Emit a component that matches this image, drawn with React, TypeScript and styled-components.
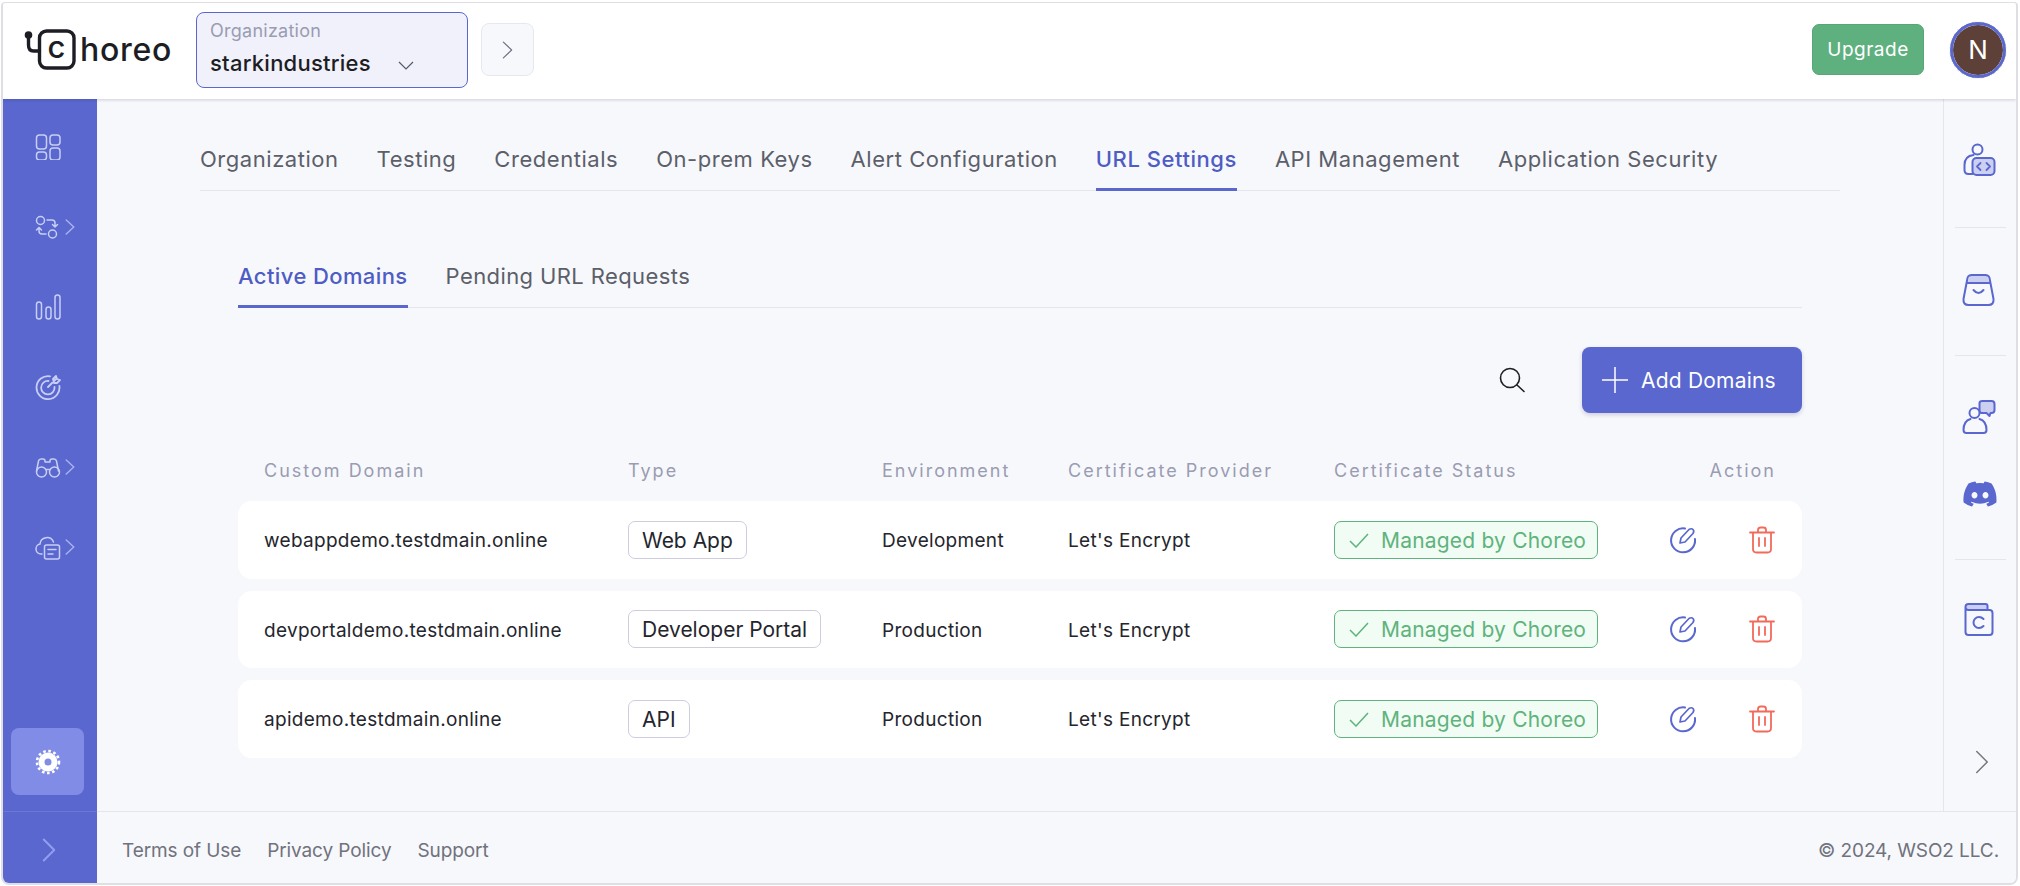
import React, { FC, ReactNode } from "react";
import styled, { createGlobalStyle } from "styled-components";
import { FaDiscord } from "react-icons/fa";

const GlobalStyle = createGlobalStyle`
  html, body {
    margin: 0;
    padding: 0;
    background: #fff;
    font-family: "Inter", "Liberation Sans", sans-serif;
  }
  * { box-sizing: border-box; }
`;

const topTabs = [
  "Organization",
  "Testing",
  "Credentials",
  "On-prem Keys",
  "Alert Configuration",
  "URL Settings",
  "API Management",
  "Application Security",
];

const domains = [
  { name: "webappdemo.testdmain.online", type: "Web App", env: "Development" },
  { name: "devportaldemo.testdmain.online", type: "Developer Portal", env: "Production" },
  { name: "apidemo.testdmain.online", type: "API", env: "Production" },
];

const Chevron: FC<{ size: number; color: string; width?: number }> = ({ size, color, width = 1.5 }) => (
  <svg width={size / 2 + 2} height={size} viewBox="0 0 8 16" fill="none" stroke={color} strokeWidth={width} strokeLinecap="round" strokeLinejoin="round" preserveAspectRatio="none">
    <path d="M1 1l6 7-6 7" vectorEffect="non-scaling-stroke" />
  </svg>
);

const Logo: FC = () => (
  <LogoWrap>
    <svg width="52" height="44" viewBox="0 0 52 44" fill="none" stroke="#1d1d24" strokeWidth="3.4" strokeLinecap="round">
      <circle cx="4.5" cy="7" r="3.8" fill="#1d1d24" stroke="none" />
      <path d="M4.500 8v9q0 6 5 6h6" />
      <rect x="15.500" y="3" width="34.500" height="37" rx="7" />
    </svg>
    <LogoC>c</LogoC>
    <LogoText>horeo</LogoText>
  </LogoWrap>
);

const NavSvg: FC<{ children: ReactNode }> = ({ children }) => (
  <svg width="26" height="26" viewBox="0 0 26 26" fill="none" stroke="#c9cef4" strokeWidth="1.5" strokeLinecap="round" strokeLinejoin="round">
    {children}
  </svg>
);

const navItems: { icon: ReactNode; more?: boolean }[] = [
  {
    icon: (
      <NavSvg>
        <rect x="1.5" y="1" width="10" height="14" rx="3" />
        <rect x="15" y="1" width="10" height="10" rx="3" />
        <rect x="1.5" y="18" width="10" height="8" rx="3" />
        <rect x="15" y="14" width="10" height="12" rx="3" />
      </NavSvg>
    ),
  },
  {
    more: true,
    icon: (
      <NavSvg>
        <circle cx="5.500" cy="6.500" r="4" />
        <circle cx="17.500" cy="20" r="4" />
        <path d="M12 6h5q3 0 3 3v4M17.500 10.500l2.500 2.500 2.500-2.500M11 20H7q-3 0-3-3v-3M1.500 16L4 13.500 6.500 16" />
      </NavSvg>
    ),
  },
  {
    icon: (
      <NavSvg>
        <rect x="1.5" y="8" width="5" height="17" rx="2.5" />
        <rect x="11" y="13" width="5" height="12" rx="2.5" />
        <rect x="20" y="1" width="5" height="24" rx="2.5" />
      </NavSvg>
    ),
  },
  {
    icon: (
      <NavSvg>
        <path d="M15 2.300A11.500 11.500 0 1 0 24.400 12M13.500 7A6.700 6.700 0 1 0 19.500 13" strokeWidth="1.8" />
        <path d="M13 13l8-8M18 5l3-3 1 3 3 1-3 3h-3z" strokeWidth="1.8" />
      </NavSvg>
    ),
  },
  {
    more: true,
    icon: (
      <NavSvg>
        <circle cx="6.500" cy="18" r="5" />
        <circle cx="19.500" cy="18" r="5" />
        <path d="M1.500 17l2-10q.5-2 2.500-2h2q2 0 2 2v1h5V7q0-2 2-2h2q2 0 2.500 2l2 10M11.500 15.500h3" />
      </NavSvg>
    ),
  },
  {
    more: true,
    icon: (
      <NavSvg>
        <path d="M7 20H6a5 5 0 0 1-1-9.900A7 7 0 0 1 18.500 8" />
        <rect x="9.500" y="11" width="15" height="14" rx="2" />
        <path d="M13 15.500h8M13 20h5" />
      </NavSvg>
    ),
  },
];

const RailSvg: FC<{ children: ReactNode }> = ({ children }) => (
  <svg width="36" height="36" viewBox="1.5 0 36 36" fill="none" stroke="#5967cf" strokeWidth="2" strokeLinecap="round" strokeLinejoin="round">
    {children}
  </svg>
);

const App: FC = () => {
  return (
    <Window>
      <GlobalStyle />
      <Header>
        <Logo />
        <OrgSelect>
          <OrgLabel>Organization</OrgLabel>
          <OrgValue>
            starkindustries
            <svg width="16" height="9" viewBox="0 0 16 9" fill="none" stroke="#555a6a" strokeWidth="1.2">
              <path d="M1 1l7 7 7-7" />
            </svg>
          </OrgValue>
        </OrgSelect>
        <ExpandButton>
          <Chevron size={18} color="#6d7080" width={1.2} />
        </ExpandButton>
        <HeaderRight>
          <UpgradeButton>Upgrade</UpgradeButton>
          <Avatar>N</Avatar>
        </HeaderRight>
      </Header>
      <Main>
        <Sidebar>
          {navItems.map((item, i) => (
            <NavItem key={i}>
              {item.icon}
              {item.more && <Chevron size={16} color="#a9b0ee" />}
            </NavItem>
          ))}
          <SettingsItem>
            <svg width="26" height="26" viewBox="0 0 26 26" fill="none">
              <circle cx="13" cy="13" r="11" stroke="#fff" strokeWidth="2.6" strokeDasharray="2.6 2.58" />
              <circle cx="13" cy="13" r="6.500" stroke="#fff" strokeWidth="6" />
            </svg>
          </SettingsItem>
          <CollapseItem>
            <Chevron size={24} color="#939df0" width={2} />
          </CollapseItem>
        </Sidebar>
        <ContentColumn>
          <ContentRow>
            <Page>
              <TopTabs>
                {topTabs.map((t) => (
                  <TopTab key={t} $active={t === "URL Settings"}>
                    {t}
                  </TopTab>
                ))}
              </TopTabs>
              <Section>
                <SubTabs>
                  <SubTab $active>Active Domains</SubTab>
                  <SubTab>Pending URL Requests</SubTab>
                </SubTabs>
                <Toolbar>
                  <svg width="28" height="28" viewBox="0 0 28 28" fill="none" stroke="#1d1d24" strokeWidth="1.600" strokeLinecap="round">
                    <circle cx="12" cy="12" r="9.500" />
                    <path d="M19 19l7 6.500" />
                  </svg>
                  <AddButton>
                    <svg width="26" height="26" viewBox="0 0 26 26" stroke="#fff" strokeWidth="1.500">
                      <path d="M13 0v26M0 13h26" />
                    </svg>
                    Add Domains
                  </AddButton>
                </Toolbar>
                <TableHead>
                  <HeadCell>Custom Domain</HeadCell>
                  <HeadCell>Type</HeadCell>
                  <HeadCell>Environment</HeadCell>
                  <HeadCell>Certificate Provider</HeadCell>
                  <HeadCell>Certificate Status</HeadCell>
                  <ActionHead>Action</ActionHead>
                </TableHead>
                <Rows>
                  {domains.map((d) => (
                    <Row key={d.name}>
                      <Cell>{d.name}</Cell>
                      <div>
                        <TypeBadge>{d.type}</TypeBadge>
                      </div>
                      <Cell>{d.env}</Cell>
                      <Cell>Let's Encrypt</Cell>
                      <div>
                        <StatusBadge>
                          <svg width="20" height="15" viewBox="0 0 20 15" fill="none" stroke="#5fb37c" strokeWidth="1.500">
                            <path d="M1 8l6 6L19 1" />
                          </svg>
                          Managed by Choreo
                        </StatusBadge>
                      </div>
                      <Actions>
                        <svg width="28" height="28" viewBox="0 0 28 28" fill="none" stroke="#5967cf" strokeWidth="2" strokeLinecap="round" strokeLinejoin="round">
                          <path d="M16 2.500A12 12 0 1 0 26 13" />
                          <path d="M11 17l1-5 8-8.500q2.500-1.500 4 0t0 4L16 16z" strokeWidth="1.700" />
                        </svg>
                        <svg width="26" height="28" viewBox="0 0 26 28" fill="none" stroke="#f26a5a" strokeWidth="1.800" strokeLinecap="round" strokeLinejoin="round">
                          <path d="M1 6.500h24M9 6.500V4q0-2.500 2.500-2.500h3Q17 1.500 17 4v2.500M4 6.500V23q0 3.500 3.500 3.500h11q3.500 0 3.500-3.500V6.500M10 12v8M16 12v8" />
                        </svg>
                      </Actions>
                    </Row>
                  ))}
                </Rows>
              </Section>
            </Page>
            <Rail>
              <RailGroup>
                <RailSvg>
                  <circle cx="17" cy="6.500" r="5" />
                  <path d="M13 12q-9 1-9 10v5q0 4 4 4h4" />
                  <rect x="12" y="15" width="22" height="17" rx="4" fill="#cbcff0" />
                  <path d="M20 20l-3.500 3.500L20 27M26 20l3.500 3.500L26 27" strokeWidth="1.800" />
                </RailSvg>
              </RailGroup>
              <RailGroup $tight>
                <RailSvg>
                  <path d="M7 11l2-6q.5-2 3-2h12q2.500 0 3 2l2 6z" fill="#cbcff0" stroke="none" />
                  <path d="M7 11h22M9 3.500q-1.500.5-2 2.500L3 27q-.5 6 5 6h20q5.500 0 5-6L29 6q-.5-2-2-2.500-1-.5-2-.5H11q-1 0-2 .5zM13 18q5 6 10 0" />
                </RailSvg>
              </RailGroup>
              <RailGroup $tight>
                <RailSvg>
                  <path d="M19 3q0-2 3-2h9q3 0 3 3v6q0 3-3 3h-1l-1 3-3-3h-5q-2 0-2-3z" fill="#cbcff0" />
                  <circle cx="14" cy="13" r="5" fill="#f7f8fc" />
                  <path d="M10 19q-7 2-7 11 0 3 3 3h17q3 0 3-3 0-9-7-11" />
                </RailSvg>
                <FaDiscord size={36} color="#5967cf" />
              </RailGroup>
              <RailGroup $last>
                <RailSvg>
                  <path d="M6 7V4q0-2 3-2h16q2 0 2 2v4H9q-3 0-3-1z" fill="#cbcff0" stroke="none" />
                  <path d="M27 8V4q0-2-2-2H8q-3 0-3 3v25q0 3 3 3h21q3 0 3-3V11q0-3-3-3H8q-3 0-3-3" />
                  <path d="M23 17q-2-2-4.500-2a5.500 5.500 0 0 0 0 11q2.500 0 4.500-2" />
                </RailSvg>
              </RailGroup>
              <RailChevron>
                <Chevron size={24} color="#77787f" />
              </RailChevron>
            </Rail>
          </ContentRow>
          <Footer>
            <FooterLinks>
              <span>Terms of Use</span>
              <span>Privacy Policy</span>
              <span>Support</span>
            </FooterLinks>
            <span>© 2024, WSO2 LLC.</span>
          </Footer>
        </ContentColumn>
      </Main>
    </Window>
  );
};

const Window = styled.div`
  display: flex;
  flex-direction: column;
  height: 883px;
  margin: 2px 2px 1px 1px;
  border: solid #dfdfe3;
  border-width: 1px 2px 2px 2px;
  border-radius: 4px 4px 8px 8px;
  overflow: hidden;
`;

const Header = styled.header`
  position: relative;
  z-index: 2;
  flex: none;
  display: flex;
  align-items: center;
  height: 96px;
  padding: 0 9px 3px 21px;
  background: #fff;
  box-shadow: 0 1px 3px rgba(30, 30, 60, 0.18);
`;

const LogoWrap = styled.div`
  position: relative;
  display: flex;
  align-items: center;
  width: 150px;
  margin-right: 22px;
  color: #1d1d24;
`;

const LogoC = styled.span`
  position: absolute;
  left: 15px;
  top: 0;
  width: 35px;
  text-align: center;
  font-size: 31px;
  line-height: 38px;
  font-weight: 500;
`;

const LogoText = styled.span`
  margin-left: 4px;
  font-size: 32px;
  line-height: 44px;
  font-weight: 500;
  letter-spacing: 0.7px;
`;

const OrgSelect = styled.div`
  display: flex;
  flex-direction: column;
  justify-content: center;
  gap: 9px;
  width: 272px;
  height: 76px;
  padding: 0 13px 3px;
  background: #f0f1fa;
  border: 1px solid #5967cf;
  border-radius: 8px;
`;

const OrgLabel = styled.div`
  font-size: 18px;
  line-height: 20px;
  letter-spacing: 0.25px;
  color: #9a9cb2;
`;

const OrgValue = styled.div`
  display: flex;
  align-items: center;
  gap: 27px;
  font-size: 22px;
  line-height: 26px;
  letter-spacing: 0.25px;
  font-weight: 500;
  color: #1d1d24;
  svg {
    margin-top: 5px;
  }
`;

const ExpandButton = styled.div`
  display: flex;
  align-items: center;
  justify-content: center;
  width: 53px;
  height: 53px;
  margin-left: 13px;
  background: #f7f8fc;
  border: 1px solid #e6e8f0;
  border-radius: 8px;
`;

const HeaderRight = styled.div`
  display: flex;
  align-items: center;
  gap: 25px;
  margin-left: auto;
`;

const UpgradeButton = styled.div`
  display: flex;
  align-items: center;
  justify-content: center;
  width: 112px;
  height: 51px;
  background: #5fb07f;
  border: 1px solid #58a676;
  border-radius: 7px;
  color: #fff;
  font-size: 19px;
  letter-spacing: 0.5px;
`;

const Avatar = styled.div`
  display: flex;
  align-items: center;
  justify-content: center;
  width: 58px;
  height: 58px;
  background: #5d4037;
  border: 1px solid #fff;
  border-radius: 50%;
  outline: 3px solid #5967cf;
  outline-offset: -4px;
  box-shadow: inset 0 0 0 3px #fff;
  color: #fff;
  font-size: 26px;
`;

const Main = styled.div`
  flex: 1;
  display: flex;
  min-height: 0;
`;

const Sidebar = styled.nav`
  flex: none;
  display: flex;
  flex-direction: column;
  width: 94px;
  padding-top: 8px;
  background: #5967cf;
`;

const NavItem = styled.div`
  display: flex;
  align-items: center;
  gap: 4px;
  height: 80px;
  padding-left: 32px;
`;

const SettingsItem = styled.div`
  display: flex;
  align-items: center;
  justify-content: center;
  width: 73px;
  height: 67px;
  margin: auto 0 16px 8px;
  background: #818ce6;
  border-radius: 8px;
`;

const CollapseItem = styled.div`
  display: flex;
  align-items: center;
  justify-content: center;
  height: 72px;
  padding: 4px 2px 0 0;
  border-top: 1px solid #6c78d6;
`;

const ContentColumn = styled.div`
  flex: 1;
  display: flex;
  flex-direction: column;
  min-width: 0;
  background: #f7f8fc;
`;

const ContentRow = styled.div`
  flex: 1;
  display: flex;
  min-height: 0;
`;

const Page = styled.main`
  flex: 1;
  padding: 37px 103px 0;
`;

const TopTabs = styled.div`
  display: flex;
  gap: 38px;
  border-bottom: 1px solid #e4e6ee;
`;

const TopTab = styled.div<{ $active?: boolean }>`
  height: 55px;
  padding-top: 9px;
  font-size: 22px;
  line-height: 28px;
  letter-spacing: 0.54px;
  white-space: nowrap;
  color: ${(p) => (p.$active ? "#4e5cc4" : "#5c5f6a")};
  font-weight: ${(p) => (p.$active ? 500 : 400)};
  border-bottom: 3px solid ${(p) => (p.$active ? "#5967cf" : "transparent")};
  margin-bottom: -1px;
`;

const Section = styled.section`
  padding: 62px 38px 0;
`;

const SubTabs = styled(TopTabs)`
  gap: 38px;
`;

const SubTab = styled(TopTab)`
  height: 55px;
  letter-spacing: 0.4px;
`;

const Toolbar = styled.div`
  display: flex;
  align-items: center;
  justify-content: flex-end;
  gap: 56px;
  margin-top: 39px;
`;

const AddButton = styled.div`
  display: flex;
  align-items: center;
  gap: 13px;
  width: 220px;
  height: 66px;
  padding-left: 20px;
  background: #5967cf;
  border-radius: 8px;
  box-shadow: 0 2px 4px rgba(40, 40, 90, 0.2);
  color: #fff;
  font-size: 21px;
  letter-spacing: 0.2px;
`;

const tableColumns = "364px 254px 186px 266px 264px 1fr";

const TableHead = styled.div`
  display: grid;
  grid-template-columns: ${tableColumns};
  align-items: center;
  height: 24px;
  margin-top: 45px;
  padding: 0 26px 0 26px;
`;

const HeadCell = styled.div`
  font-size: 18px;
  letter-spacing: 2px;
  color: #9a9cb2;
  white-space: nowrap;
`;

const ActionHead = styled(HeadCell)`
  text-align: right;
`;

const Rows = styled.div`
  display: flex;
  flex-direction: column;
  gap: 12px;
  margin-top: 19px;
`;

const Row = styled.div`
  display: grid;
  grid-template-columns: ${tableColumns};
  align-items: center;
  height: 77.5px;
  padding: 0 27px 0 26px;
  background: #fff;
  border-radius: 14px;
`;

const Cell = styled.div`
  padding-top: 2px;
  font-size: 19px;
  letter-spacing: 0.3px;
  color: #24252d;
  white-space: nowrap;
`;

const TypeBadge = styled.span`
  display: inline-flex;
  align-items: center;
  height: 38px;
  padding: 1px 13px 0;
  border: 1px solid #cdcddf;
  border-radius: 7px;
  font-size: 21px;
  color: #24252d;
  white-space: nowrap;
`;

const StatusBadge = styled.span`
  display: inline-flex;
  align-items: center;
  gap: 12px;
  width: 264px;
  height: 38px;
  padding: 1px 0 0 14px;
  background: #f1fcf4;
  border: 1px solid #5fb37c;
  border-radius: 7px;
  font-size: 21px;
  letter-spacing: 0.2px;
  color: #5fb37c;
  white-space: nowrap;
`;

const Actions = styled.div`
  display: flex;
  justify-content: flex-end;
  align-items: center;
  gap: 52px;
`;

const Rail = styled.aside`
  flex: none;
  display: flex;
  flex-direction: column;
  align-items: center;
  width: 73px;
  border-left: 1px solid #e4e6ee;
`;

const RailGroup = styled.div<{ $last?: boolean; $tight?: boolean }>`
  display: flex;
  flex-direction: column;
  align-items: center;
  gap: 40px;
  width: 51px;
  padding: ${(p) => (p.$last ? "42px" : "44px")} 0 ${(p) => (p.$tight ? "47px" : "48px")};
  border-bottom: 1px solid ${(p) => (p.$last ? "transparent" : "#e4e6ee")};
`;

const RailChevron = styled.div`
  margin: auto 0 0 4px;
  padding-bottom: 33px;
`;

const Footer = styled.footer`
  flex: none;
  display: flex;
  align-items: center;
  justify-content: space-between;
  height: 72px;
  padding: 6px 17px 0 25px;
  border-top: 1px solid #e4e6ee;
  font-size: 19px;
  letter-spacing: -0.1px;
  color: #70727c;
`;

const FooterLinks = styled.div`
  display: flex;
  gap: 26px;
`;

export default App;
